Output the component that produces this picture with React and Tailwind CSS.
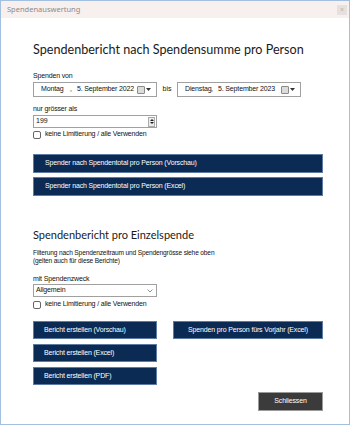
import React from 'react';

const small = { fontFamily: '"Liberation Sans", Arial, sans-serif' };
const head = { fontFamily: 'Lato, "Noto Sans", sans-serif' };

function CalIcon() {
  return (
    <span className="flex items-center gap-[1px]">
      <span className="w-[8px] h-[8px] border border-[#8a8a8a] bg-[#dcdcdc] rounded-[1px]" />
      <svg width="5" height="3" viewBox="0 0 5 3"><path d="M0 0h5L2.5 3z" fill="#333" /></svg>
    </span>
  );
}

function DateBox({ day, date, dayW }) {
  return (
    <div className="w-[124px] h-[15px] border border-[#a0a0a0] bg-white flex items-center pl-[7px] pr-[5px] text-[7px] tracking-[-0.15px] text-[#111] whitespace-nowrap">
      <span className={dayW}>{day}</span>
      <span className="w-[7px]">,</span>
      <span className="flex-1">{date}</span>
      <CalIcon />
    </div>
  );
}

function Check({ label }) {
  return (
    <div className="flex items-center gap-[4px] h-[9px] text-[7px] tracking-[-0.15px] text-[#111]">
      <span className="w-[8px] h-[8px] border border-[#666] rounded-[2px] bg-white" />
      <span>{label}</span>
    </div>
  );
}

function NavyBtn({ children, className }) {
  return (
    <div className={`bg-[#0b2b55] border border-[#5d7ba3] text-white text-[7px] tracking-[-0.15px] whitespace-nowrap flex items-center ${className}`}>
      {children}
    </div>
  );
}

export default function App() {
  return (
    <div className="w-[350px] h-[426px] bg-white overflow-hidden" style={small}>
      <div className="w-[350px] h-[425px] border border-[#a3bfe0] flex flex-col">
        {/* Titelleiste */}
        <div className="h-[17px] bg-[#f8f0ef] flex items-center justify-between pl-[6px] pr-[2px]">
          <span className="text-[7.5px] text-[#8a8a8a]" style={{ fontFamily: '"Noto Sans", sans-serif' }}>Spendenauswertung</span>
          <span className="w-[10px] h-[10px] bg-[#e6e0df] text-[6px] text-[#aaa] flex items-center justify-center">x</span>
        </div>

        <div className="pl-[32px] pr-[26px] flex flex-col">
          <h1 className="mt-[23px] h-[18px] leading-[18px] text-[12.6px] text-[#1a1a1a] whitespace-nowrap" style={head}>
            Spendenbericht nach Spendensumme pro Person
          </h1>

          <div className="mt-[12px] h-[9px] leading-[9px] text-[7px] tracking-[-0.15px] text-[#111]">Spenden von</div>
          <div className="mt-[2px] flex items-center">
            <DateBox day="Montag" date="5. September 2022" dayW="w-[29px]" />
            <span className="w-[20px] text-center text-[7px] text-[#111]">bis</span>
            <DateBox day="Dienstag" date="5. September 2023" dayW="w-[26px]" />
          </div>

          <div className="mt-[7px] h-[9px] leading-[9px] text-[7px] tracking-[-0.15px] text-[#111]">nur grösser als</div>
          <div className="mt-[2px] w-[124px] h-[13px] border border-[#a0a0a0] bg-white flex items-center pl-[2px] pr-[1px] text-[7px] text-[#111]">
            <span className="flex-1">199</span>
            <span className="w-[7px] h-[10px] border border-[#aaa] bg-[#ececec] flex flex-col items-center justify-center gap-[1px]">
              <svg width="4" height="2" viewBox="0 0 4 2"><path d="M0 2h4L2 0z" fill="#222" /></svg>
              <svg width="4" height="2" viewBox="0 0 4 2"><path d="M0 0h4L2 2z" fill="#222" /></svg>
            </span>
          </div>
          <div className="mt-[2px]">
            <Check label="keine Limitierung / alle Verwenden" />
          </div>

          <NavyBtn className="mt-[15px] h-[19px] pl-[11px]">Spender nach Spendentotal pro Person (Vorschau)</NavyBtn>
          <NavyBtn className="mt-[4px] h-[19px] pl-[11px]">Spender nach Spendentotal pro Person (Excel)</NavyBtn>

          <h2 className="mt-[31px] h-[16px] leading-[16px] text-[11px] text-[#1a1a1a] whitespace-nowrap" style={head}>
            Spendenbericht pro Einzelspende
          </h2>
          <div className="mt-[6px] text-[6.6px] tracking-[-0.15px] leading-[8px] text-[#111]">
            Filterung nach Spendenzeitraum und Spendengrösse siehe oben
            <br />
            (gelten auch für diese Berichte)
          </div>

          <div className="mt-[9px] h-[9px] leading-[9px] text-[7px] tracking-[-0.15px] text-[#111]">mit Spendenzweck</div>
          <div className="mt-[1px] w-[124px] h-[13px] border border-[#a0a0a0] bg-white flex items-center pl-[2px] pr-[3px] text-[7px] tracking-[-0.15px] text-[#111]">
            <span className="flex-1">Allgemein</span>
            <svg width="6" height="4" viewBox="0 0 6 4"><path d="M0.5 0.5L3 3L5.5 0.5" stroke="#777" strokeWidth="0.8" fill="none" /></svg>
          </div>
          <div className="mt-[3px]">
            <Check label="keine Limitierung / alle Verwenden" />
          </div>

          <div className="mt-[12px] flex gap-[16px]">
            <div className="flex flex-col gap-[5px]">
              <NavyBtn className="w-[124px] h-[18px] pl-[10px]">Bericht erstellen (Vorschau)</NavyBtn>
              <NavyBtn className="w-[124px] h-[18px] pl-[10px]">Bericht erstellen (Excel)</NavyBtn>
              <NavyBtn className="w-[124px] h-[18px] pl-[10px]">Bericht erstellen (PDF)</NavyBtn>
            </div>
            <div>
              <NavyBtn className="w-[150px] h-[18px] justify-center">Spenden pro Person fürs Vorjahr (Excel)</NavyBtn>
            </div>
          </div>

          <div className="mt-[7px] flex justify-end">
            <div className="w-[65px] h-[19px] bg-[#3b3b3b] border border-[#9a9a9a] text-white text-[7px] tracking-[-0.15px] flex items-center justify-center">
              Schliessen
            </div>
          </div>
        </div>
      </div>
    </div>
  );
}
